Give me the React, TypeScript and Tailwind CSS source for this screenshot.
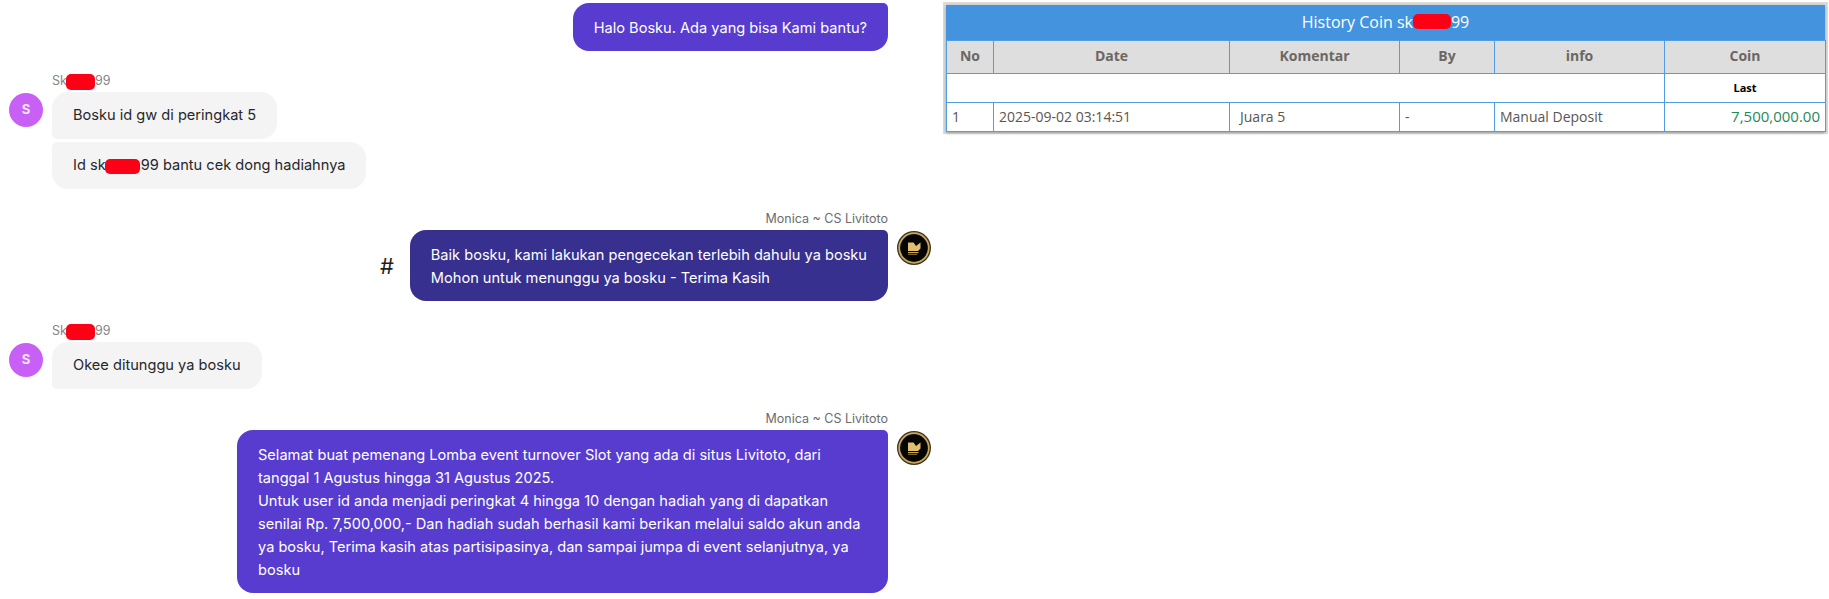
const inter = 'font-["Inter",sans-serif]'

function Redact({ className }: { className: string }) {
  return <span className={`-my-1 inline-block rounded-[5px] bg-[#fe0016] align-middle ${className}`} />
}

function CsAvatar() {
  return (
    <svg viewBox="0 0 34 34" className="mt-px h-[34px] w-[34px] shrink-0">
      <circle cx="17" cy="17" r="17" fill="#3a3224" />
      <circle cx="17" cy="17" r="14.8" fill="none" stroke="#c9a654" strokeWidth="1.8" />
      <circle cx="17" cy="17" r="13.6" fill="#050505" />
      <path d="M11 11.5h5.5l2.5 3.5 4.5-3.5v6l-2.5 2.5H11z" fill="#e0c070" />
      <path d="M11 21h10.5v1.2H11z" fill="#c9a654" />
      <path d="M11 23h9v1H11z" fill="#7a6028" />
    </svg>
  )
}

function UserAvatar() {
  return (
    <div className="mt-px flex h-[34px] w-[34px] shrink-0 items-center justify-center rounded-full bg-[#c860f5] text-[13px] font-bold text-[#f7e4fe]">
      S
    </div>
  )
}

function AgentName() {
  return (
    <div className="mb-[3px] text-right text-[12.5px] leading-4 text-[#6b6b70]">Monica ~ CS Livitoto</div>
  )
}

function UserName() {
  return (
    <div className="mb-[3px] pl-[43px] text-[12.5px] leading-4 text-[#85858a]">
      Sk
      <Redact className="-ml-px h-4 w-[29px]" />
      99
    </div>
  )
}

function UserBubble({ children, className }: { children: React.ReactNode; className: string }) {
  return (
    <div className={`w-fit bg-[#f4f4f5] px-[21px] py-3 text-[14.6px] leading-[23px] text-[#27272a] ${className}`}>
      {children}
    </div>
  )
}

function Chat() {
  return (
    <div className={`w-[943px] shrink-0 pl-[9px] pr-3 pt-[3px] ${inter}`}>
      <div className="flex justify-end gap-[9px]">
        <div className="rounded-2xl rounded-tr-[5px] bg-[#583cd0] px-[21px] pb-[11.5px] pt-[13.5px] text-[14.6px] leading-[23px] text-white">
          Halo Bosku. Ada yang bisa Kami bantu?
        </div>
        <div className="w-[34px] shrink-0" />
      </div>

      <div className="mt-[22px]">
        <UserName />
        <div className="flex gap-[9px]">
          <UserAvatar />
          <div className="flex flex-col gap-[3px]">
            <UserBubble className="rounded-2xl rounded-bl-[5px]">Bosku id gw di peringkat 5</UserBubble>
            <UserBubble className="rounded-2xl rounded-tl-[5px]">
              Id sk
              <Redact className="-ml-px mr-px h-[15px] w-[35px]" />
              99 bantu cek dong hadiahnya
            </UserBubble>
          </div>
        </div>
      </div>

      <div className="mt-[22px]">
        <div className="pr-[43px]">
          <AgentName />
        </div>
        <div className="flex justify-end gap-[9px]">
          <div className="flex items-center gap-4">
            <span className="text-[22px] leading-none text-[#1f1f23]">#</span>
            <div className="rounded-2xl rounded-tr-[5px] bg-[#38308f] px-[21px] pb-[11.5px] pt-[13.5px] text-[14.6px] leading-[23px] text-white">
              Baik bosku, kami lakukan pengecekan terlebih dahulu ya bosku
              <br />
              Mohon untuk menunggu ya bosku - Terima Kasih
            </div>
          </div>
          <CsAvatar />
        </div>
      </div>

      <div className="mt-[22px]">
        <UserName />
        <div className="flex gap-[9px]">
          <UserAvatar />
          <UserBubble className="rounded-2xl rounded-bl-[5px]">Okee ditunggu ya bosku</UserBubble>
        </div>
      </div>

      <div className="mt-[22px]">
        <div className="pr-[43px]">
          <AgentName />
        </div>
        <div className="flex justify-end gap-[9px]">
          <div className="w-[651px] rounded-2xl rounded-tr-[5px] bg-[#583cd0] px-[21px] pb-[11.5px] pt-[13.5px] text-[14.6px] leading-[23px] text-white">
            Selamat buat pemenang Lomba event turnover Slot yang ada di situs Livitoto, dari
            <br />
            tanggal 1 Agustus hingga 31 Agustus 2025.
            <br />
            Untuk user id anda menjadi peringkat 4 hingga 10 dengan hadiah yang di dapatkan
            <br />
            senilai Rp. 7,500,000,- Dan hadiah sudah berhasil kami berikan melalui saldo akun anda
            <br />
            ya bosku, Terima kasih atas partisipasinya, dan sampai jumpa di event selanjutnya, ya
            <br />
            bosku
          </div>
          <CsAvatar />
        </div>
      </div>
    </div>
  )
}

const th = 'border border-[#519ce2] bg-[#dedede] pb-0.5 text-center text-sm font-bold text-[#6b6763]'
const td = 'border border-[#519ce2] px-[5px] text-left text-sm'

function HistoryTable() {
  return (
    <div className="mt-[2px] h-[132px] w-[885px] bg-[#dcdcd8] pl-[3px] pt-[3px] font-['Open_Sans',sans-serif]">
      <div className="w-[879px] shadow-[0_1px_3px_rgba(0,0,0,0.3)]">
        <div className="flex h-[35px] items-center justify-center bg-[#4393de] pb-0.5 text-base text-white">
          History Coin sk
          <Redact className="h-[15px] w-[38px]" />
          99
        </div>
        <table className="w-full table-fixed border-collapse bg-white">
          <colgroup>
            <col className="w-[47px]" />
            <col className="w-[236px]" />
            <col className="w-[170px]" />
            <col className="w-[95px]" />
            <col className="w-[170px]" />
            <col className="w-[161px]" />
          </colgroup>
          <thead>
            <tr className="h-[33px]">
              <th className={th}>No</th>
              <th className={th}>Date</th>
              <th className={th}>Komentar</th>
              <th className={th}>By</th>
              <th className={th}>info</th>
              <th className={th}>Coin</th>
            </tr>
          </thead>
          <tbody>
            <tr className="h-[29px]">
              <td colSpan={5} className="border border-[#519ce2]" />
              <td className="border border-[#519ce2] text-center text-[11px] font-bold text-black">Last</td>
            </tr>
            <tr className="h-[29px] text-[#5a5654]">
              <td className={td}>1</td>
              <td className={td}>2025-09-02 03:14:51</td>
              <td className={`${td} !pl-[10px]`}>Juara 5</td>
              <td className={td}>-</td>
              <td className={td}>Manual Deposit</td>
              <td className={`${td} !text-right !text-[15px] text-[#1f8a5b]`}>7,500,000.00</td>
            </tr>
          </tbody>
        </table>
      </div>
    </div>
  )
}

export default function App() {
  return (
    <div className="flex h-[599px] w-[1829px] items-start overflow-hidden bg-white">
      <Chat />
      <HistoryTable />
    </div>
  )
}
